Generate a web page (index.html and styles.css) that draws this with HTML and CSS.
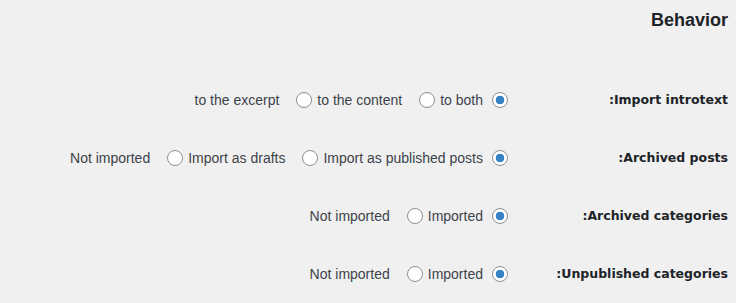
FILE: index.html
```html
<!DOCTYPE html>
<html dir="rtl">

<head>
    <title>Import settings</title>
    <link rel="stylesheet" href="styles.css">
</head>

<body>
    <div class="wrap">
        <h2 class="section-title">Behavior</h2>

        <div class="form-row">
            <div class="form-label">Import introtext:</div>
            <div class="form-field">
                <div class="choices">
                    <span class="choice-text">to the excerpt</span>
                    <input type="radio" class="choice-radio" name="introtext">
                    <span class="choice-text">to the content</span>
                    <input type="radio" class="choice-radio" name="introtext">
                    <span class="choice-text">to both</span>
                    <input type="radio" class="choice-radio first-radio" name="introtext" checked>
                </div>
            </div>
        </div>

        <div class="form-row">
            <div class="form-label">Archived posts:</div>
            <div class="form-field">
                <div class="choices">
                    <span class="choice-text">Not imported</span>
                    <input type="radio" class="choice-radio" name="archived">
                    <span class="choice-text">Import as drafts</span>
                    <input type="radio" class="choice-radio" name="archived">
                    <span class="choice-text">Import as published posts</span>
                    <input type="radio" class="choice-radio first-radio" name="archived" checked>
                </div>
            </div>
        </div>

        <div class="form-row">
            <div class="form-label">Archived categories:</div>
            <div class="form-field">
                <div class="choices">
                    <span class="choice-text">Not imported</span>
                    <input type="radio" class="choice-radio" name="archived-cats">
                    <span class="choice-text">Imported</span>
                    <input type="radio" class="choice-radio first-radio" name="archived-cats" checked>
                </div>
            </div>
        </div>

        <div class="form-row">
            <div class="form-label">Unpublished categories:</div>
            <div class="form-field">
                <div class="choices">
                    <span class="choice-text">Not imported</span>
                    <input type="radio" class="choice-radio" name="unpublished-cats">
                    <span class="choice-text">Imported</span>
                    <input type="radio" class="choice-radio first-radio" name="unpublished-cats" checked>
                </div>
            </div>
        </div>
    </div>
</body>

</html>
```

FILE: styles.css
```css
body {
    margin: 0;
    background-color: #f0f0f1;
    direction: rtl;
    font-family: "Liberation Sans", Arial, sans-serif;
    font-size: 14px;
    color: #3c434a;
}

.wrap {
    padding-right: 8px;
}

.section-title {
    margin: 9px 0 39px 0;
    font-size: 18px;
    line-height: 23px;
    font-weight: bold;
    color: #1d2327;
}

.form-row {
    display: flex;
}

.form-label {
    width: 200px;
    padding: 20px 0 20px 10px;
    font-family: "DejaVu Sans", sans-serif;
    font-size: 12.5px;
    font-weight: bold;
    line-height: 18px;
    color: #1d2327;
    text-align: right;
}

.form-field {
    padding: 20px 10px;
}

.choices {
    display: flex;
    direction: ltr;
    align-items: center;
    height: 18px;
    line-height: 18px;
}

.choice-radio {
    appearance: none;
    box-sizing: border-box;
    width: 16px;
    height: 16px;
    margin: 0 5px 0 17px;
    border: 1px solid #8c8f94;
    border-radius: 50%;
    background-color: #fff;
}

.choice-radio:checked {
    background: radial-gradient(circle, #3582c4 0 4px, #fff 4.6px);
}

.first-radio {
    margin: 0 0 0 9px;
}
```
